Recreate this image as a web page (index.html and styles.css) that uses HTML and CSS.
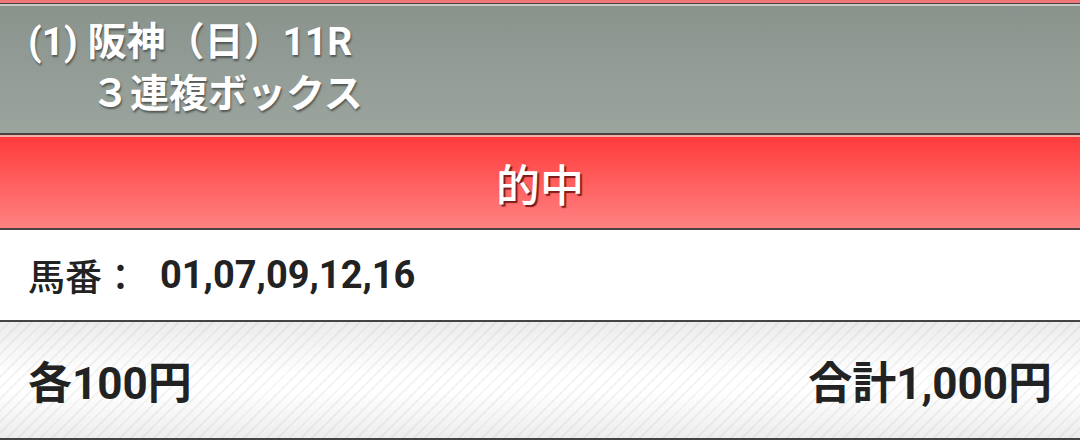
FILE: index.html
```html
<!DOCTYPE html>
<html lang="ja">
<head>
  <meta charset="UTF-8">
  <meta name="viewport" content="width=device-width, initial-scale=1.0">
  <title>的中 - 3連複ボックス</title>
  <link rel="stylesheet" href="styles.css">
</head>
<body>
  <div class="ticket">
    <!-- レース情報 -->
    <div class="race-header">
      <p class="race-name">(1) 阪神（日）11R</p>
      <p class="bet-type">３連複ボックス</p>
    </div>
    <!-- 結果 -->
    <div class="result-bar">的中</div>
    <!-- 馬番 -->
    <div class="numbers-row">
      <span class="label">馬番：</span>
      <span class="numbers">01,07,09,12,16</span>
    </div>
    <!-- 金額 -->
    <div class="amount-row">
      <span>各100円</span>
      <span>合計1,000円</span>
    </div>
  </div>
</body>
</html>
```

FILE: styles.css
```css
* {
  margin: 0;
  padding: 0;
  box-sizing: border-box;
}
body {
  font-family: 'Roboto', 'Noto Sans CJK JP', sans-serif;
  background: #fff;
  width: 1080px;
  height: 440px;
  overflow: hidden;
}
.ticket {
  border-top: 3px solid #f07878;
}
/* レース情報 */
.race-header {
  height: 132px;
  border-top: 1px solid #4a3f3f;
  border-bottom: 2px solid #4a4040;
  box-shadow: inset 0 2px 0 #c8cac8;
  background: linear-gradient(#8a928c, #9ba59e);
  color: #fff;
  padding: 12px 28px 0;
  text-shadow: 1px 2px 2px rgba(40, 40, 40, 0.6);
  font-weight: 700;
  font-size: 39px;
  line-height: 52px;
}
.bet-type {
  padding-left: 63px;
}
/* 的中バー */
.result-bar {
  height: 95px;
  border-top: 2px solid #f0b0a8;
  border-bottom: 2px solid #4a4040;
  background: linear-gradient(#ff3b3b, #ff8282);
  color: #fff;
  font-size: 44px;
  font-weight: 500;
  display: flex;
  align-items: center;
  justify-content: center;
  text-shadow: 2px 2px 1px #7a1c1c;
}
/* 馬番 */
.numbers-row {
  height: 92px;
  border-bottom: 2px solid #444;
  display: flex;
  align-items: center;
  padding: 0 28px;
  color: #222;
  font-size: 38px;
  font-weight: 700;
}
.numbers-row .label {
  font-weight: 500;
  font-size: 37px;
  width: 132px;
}
/* 金額 */
.amount-row {
  height: 120px;
  border-bottom: 4px solid #444;
  display: flex;
  justify-content: space-between;
  align-items: center;
  padding: 0 28px;
  color: #222;
  font-size: 44px;
  font-weight: 700;
  background:
    repeating-linear-gradient(-45deg, rgba(0,0,0,0) 0, rgba(0,0,0,0) 6px, rgba(0,0,0,0.045) 6px, rgba(0,0,0,0.045) 8px),
    linear-gradient(#ececec, #fff 45%, #fff 60%, #ededed);
}
```
